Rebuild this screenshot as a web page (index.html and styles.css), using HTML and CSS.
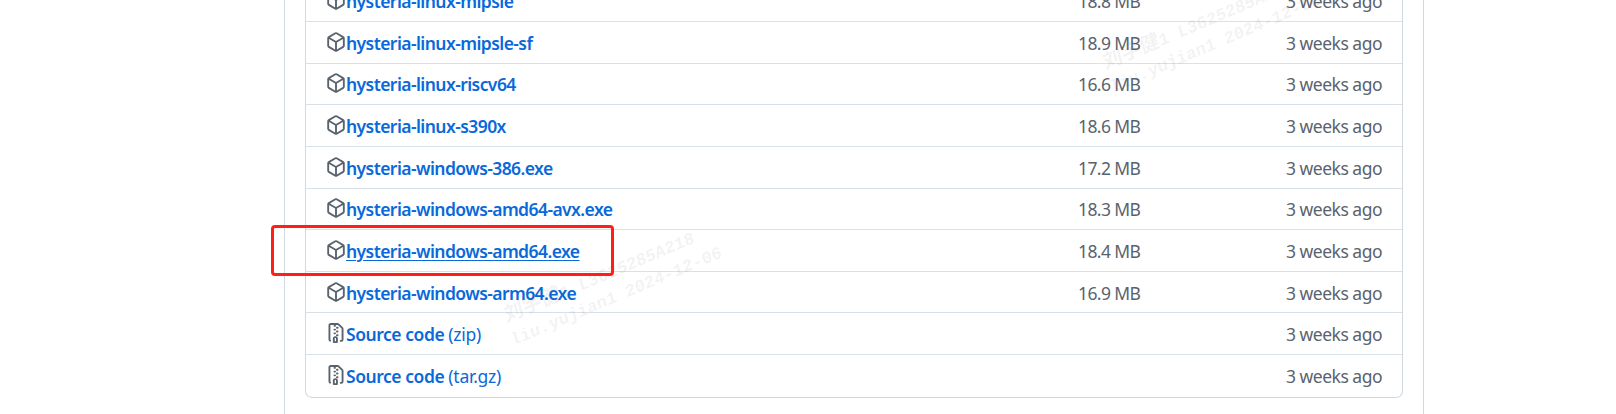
FILE: index.html
```
<!DOCTYPE html>
<html lang="en">
<head>
<meta charset="utf-8">
<title>Release assets</title>
<link rel="stylesheet" href="styles.css">
</head>
<body>
<svg class="defs" width="0" height="0">
  <symbol id="cube" viewBox="0 0 16 16"><path d="m8.878.392 5.25 3.045c.54.314.872.89.872 1.514v6.098a1.75 1.75 0 0 1-.872 1.514l-5.25 3.045a1.75 1.75 0 0 1-1.756 0l-5.25-3.045A1.75 1.75 0 0 1 1 11.049V4.951c0-.624.332-1.201.872-1.514L7.122.392a1.75 1.75 0 0 1 1.756 0ZM7.875 1.69l-4.63 2.685L8 7.133l4.755-2.758-4.63-2.685a.248.248 0 0 0-.25 0ZM2.5 5.677v5.372c0 .09.047.171.125.216l4.625 2.683V8.432Zm6.25 8.271 4.625-2.683a.25.25 0 0 0 .125-.216V5.677L8.75 8.432Z"/></symbol>
  <symbol id="zip" viewBox="0 0 16 16"><path d="M3.5 1.75v11.5c0 .09.048.173.126.217a.75.75 0 0 1-.752 1.298A1.748 1.748 0 0 1 2 13.25V1.75C2 .784 2.784 0 3.75 0h5.586c.464 0 .909.185 1.237.513l2.914 2.914c.329.328.513.773.513 1.237v8.586A1.75 1.75 0 0 1 12.25 15h-.5a.75.75 0 0 1 0-1.5h.5a.25.25 0 0 0 .25-.25V4.664a.25.25 0 0 0-.073-.177L9.513 1.573a.25.25 0 0 0-.177-.073H7.25a.75.75 0 0 1 0 1.5h-.5a.75.75 0 0 1 0-1.5h-3a.25.25 0 0 0-.25.25Zm3.75 8.75h.5c.966 0 1.75.784 1.75 1.75v3a.75.75 0 0 1-.75.75h-2.5a.75.75 0 0 1-.75-.75v-3c0-.966.784-1.75 1.75-1.75ZM6 5.25a.75.75 0 0 1 .75-.75h.5a.75.75 0 0 1 0 1.5h-.5A.75.75 0 0 1 6 5.25Zm.75 2.25h.5a.75.75 0 0 1 0 1.5h-.5a.75.75 0 0 1 0-1.5ZM8 6.75A.75.75 0 0 1 8.75 6h.5a.75.75 0 0 1 0 1.5h-.5A.75.75 0 0 1 8 6.75ZM8.75 3h.5a.75.75 0 0 1 0 1.5h-.5a.75.75 0 0 1 0-1.5ZM8 9.75A.75.75 0 0 1 8.75 9h.5a.75.75 0 0 1 0 1.5h-.5A.75.75 0 0 1 8 9.75Zm-1 2.5v2.25h1v-2.25a.25.25 0 0 0-.25-.25h-.5a.25.25 0 0 0-.25.25Z"/></symbol>
</svg>
<main class="release">
  <ul class="assets">
    <li class="row"><svg class="icon"><use href="#cube"/></svg><a class="name">hysteria-linux-mipsle</a><span class="size">18.8 MB</span><span class="age">3 weeks ago</span></li>
    <li class="row"><svg class="icon"><use href="#cube"/></svg><a class="name">hysteria-linux-mipsle-sf</a><span class="size">18.9 MB</span><span class="age">3 weeks ago</span></li>
    <li class="row"><svg class="icon"><use href="#cube"/></svg><a class="name">hysteria-linux-riscv64</a><span class="size">16.6 MB</span><span class="age">3 weeks ago</span></li>
    <li class="row"><svg class="icon"><use href="#cube"/></svg><a class="name">hysteria-linux-s390x</a><span class="size">18.6 MB</span><span class="age">3 weeks ago</span></li>
    <li class="row"><svg class="icon"><use href="#cube"/></svg><a class="name">hysteria-windows-386.exe</a><span class="size">17.2 MB</span><span class="age">3 weeks ago</span></li>
    <li class="row"><svg class="icon"><use href="#cube"/></svg><a class="name">hysteria-windows-amd64-avx.exe</a><span class="size">18.3 MB</span><span class="age">3 weeks ago</span></li>
    <li class="row"><svg class="icon"><use href="#cube"/></svg><a class="name hovered">hysteria-windows-amd64.exe</a><span class="size">18.4 MB</span><span class="age">3 weeks ago</span></li>
    <li class="row"><svg class="icon"><use href="#cube"/></svg><a class="name">hysteria-windows-arm64.exe</a><span class="size">16.9 MB</span><span class="age">3 weeks ago</span></li>
    <li class="row"><svg class="icon"><use href="#zip"/></svg><a class="name source">Source code <span class="kind">(zip)</span></a><span class="size"></span><span class="age">3 weeks ago</span></li>
    <li class="row"><svg class="icon"><use href="#zip"/></svg><a class="name source">Source code <span class="kind">(tar.gz)</span></a><span class="size"></span><span class="age">3 weeks ago</span></li>
  </ul>
</main>
<div class="watermark wm-left"><span class="han">刘宇健</span>1 L3625285A218<br>liu.yujian1 2024-12-06</div>
<div class="watermark wm-right"><span class="han">刘宇健</span>1 L3625285A218<br>liu.yujian1 2024-12-06</div>
<div class="highlight"></div>
</body>
</html>
```
FILE: styles.css
```
* { box-sizing: border-box; }
body {
  margin: 0;
  height: 414px;
  position: relative;
  overflow: hidden;
  background: #fff;
  font-family: "Noto Sans", "Open Sans", sans-serif;
  font-size: 17.5px;
  color: #59636e;
}
.defs { display: block; }
.release {
  width: 1140px;
  height: 414px;
  margin-left: 284px;
  padding: 0 20px;
  border: solid #d1d9e0;
  border-width: 0 1px;
  display: flex;
  align-items: flex-start;
}
.assets {
  list-style: none;
  width: 1098px;
  height: 417.625px;
  margin: -19.625px 0 0;
  padding: 0;
  border: 1px solid #d1d9e0;
  border-top: 0;
  border-radius: 0 0 7px 7px;
}
.row {
  height: 41.625px;
  padding: 1px 20px 0 20px;
  display: flex;
  align-items: center;
  border-bottom: 1px solid #d9e0e6;
  white-space: nowrap;
}
.row:last-child { border-bottom: 0; }
.icon {
  flex: none;
  width: 20px;
  height: 20px;
  margin: -2px 0 0 0;
  fill: #59636e;
}
.name {
  width: 732px;
  color: #0969da;
  font-weight: 600;
  letter-spacing: -0.57px;
}
.source { letter-spacing: -0.45px; }
.hovered { text-decoration: underline; text-decoration-thickness: 1px; text-underline-offset: 2px; }
.kind { font-weight: 400; letter-spacing: -0.25px; }
.size { width: 100px; letter-spacing: -0.6px; }
.age { margin-left: auto; letter-spacing: -0.5px; }
.highlight {
  position: absolute;
  left: 271px;
  top: 225px;
  width: 343px;
  height: 51px;
  border: 3px solid #ff2015;
  border-radius: 4px;
}
.watermark {
  position: absolute;
  font: 700 17.3px/24px "Liberation Mono", "Noto Sans CJK SC", monospace;
  color: rgba(70, 70, 70, .085);
  white-space: nowrap;
  transform-origin: 0 0;
  transform: rotate(-23deg) skewX(-8deg);
}
.han { font-size: 20px; line-height: 20px; }
.wm-left { left: 502px; top: 307px; }
.wm-right { left: 1101px; top: 54px; }
```
